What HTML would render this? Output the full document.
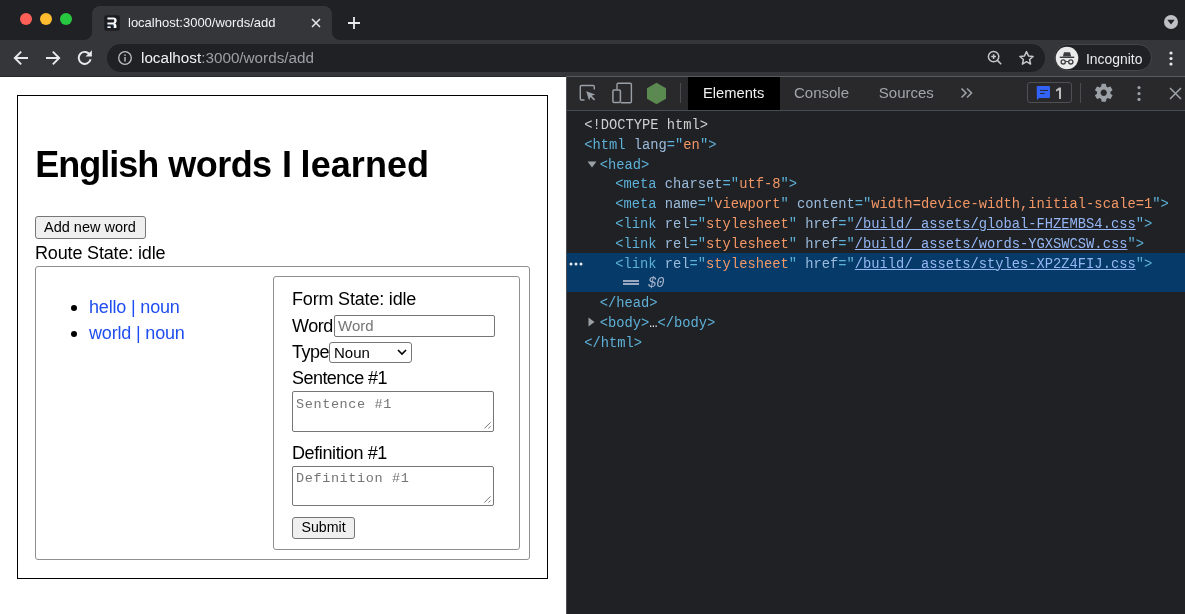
<!DOCTYPE html>
<html lang="en">
<head>
<meta charset="utf-8">
<style>
*{box-sizing:border-box;margin:0;padding:0}
html,body{width:1185px;height:614px;overflow:hidden;background:#fff}
body{will-change:transform;position:relative;font-family:"Liberation Sans",sans-serif}
.a{position:absolute}
.t{position:absolute;white-space:pre;line-height:1}
/* chrome */
#strip{left:0;top:0;width:1185px;height:40px;background:#202124}
#toolbar{left:0;top:40px;width:1185px;height:37px;background:#35363a;border-bottom:1px solid #28292c}
.light{width:12px;height:12px;border-radius:50%;top:13px}
#tab{left:92px;top:6px;width:240px;height:34px;background:#35363a;border-radius:8px 8px 0 0}
.flare{width:8px;height:8px;top:32px;background:#35363a;overflow:hidden}
.flare::after{content:"";position:absolute;width:16px;height:16px;border-radius:50%;background:#202124;top:-8px}
#fl::after{left:-8px}
#fr::after{left:0}
#omni{left:107px;top:44px;width:938px;height:28px;border-radius:14px;background:#202124}
#incog{left:1054px;top:44px;width:98px;height:27px;border-radius:14px;background:#202124;border:1px solid #45464a}
/* page */
#page{left:0;top:77px;width:566px;height:537px;background:#fff}
.lbl{font-size:18px;color:#000}
/* devtools */
#dt{left:566px;top:76px;width:619px;height:538px;background:#202124;border-left:1px solid #4d4e52;border-top:1px solid #5a5b5f}
#dtbar{left:567px;top:77px;width:618px;height:34px;background:#29292c;border-bottom:1px solid #494c50}
.code{font-family:"Liberation Mono",monospace;font-size:13.77px;white-space:pre;position:absolute;line-height:19.75px;height:19.75px}
.tg{color:#5db0d7}.an{color:#9bbbdc}.av{color:#f29766}.lk{color:#94b6f4;text-decoration:underline;text-underline-offset:0.6px}
</style>
</head>
<body>
<!-- ===== Browser chrome ===== -->
<div id="strip" class="a"></div>
<div class="a light" style="left:20px;background:#fe5f57"></div>
<div class="a light" style="left:40px;background:#febc2e"></div>
<div class="a light" style="left:60px;background:#28c840"></div>
<div id="tab" class="a"></div>
<div id="fl" class="a flare" style="left:84px"></div>
<div id="fr" class="a flare" style="left:332px"></div>
<!-- favicon -->
<svg class="a" style="left:104px;top:15px" width="16" height="16" viewBox="0 0 16 16">
<rect x="0.3" y="0.3" width="15.5" height="15.4" rx="2" fill="#1b1c1f"/>
<path d="M3.4 2.6H9.6C11.5 2.6 12.7 3.7 12.7 5.6C12.7 7 12 8 11 8.4C11.9 8.8 12.4 9.5 12.4 10.6V13H9.7V10.8C9.7 9.9 9.3 9.4 8.3 9.4H3.4V7.5H9.2C9.9 7.5 10.2 7 10.2 6.3V5.7C10.2 5 9.9 4.5 9.2 4.5H3.4Z" fill="#f4f6fb"/>
<rect x="3.4" y="11.4" width="3.3" height="1.6" fill="#f4f6fb"/>
<path d="M4.5 10.2h1.2M8 10.2h1.2" stroke="#2f5d9a" stroke-width="0.8"/>
</svg>
<div class="t" style="left:128px;top:15.6px;font-size:13px;color:#f1f3f4">localhost:3000/words/add</div>
<svg class="a" style="left:310px;top:17px" width="12" height="12" viewBox="0 0 12 12"><path d="M2 2L10 10M10 2L2 10" stroke="#e8eaed" stroke-width="1.5"/></svg>
<svg class="a" style="left:347px;top:16px" width="14" height="14" viewBox="0 0 14 14"><path d="M7 1v12M1 7h12" stroke="#e8eaed" stroke-width="1.8"/></svg>
<svg class="a" style="left:1161px;top:12px" width="20" height="20" viewBox="0 0 20 20"><circle cx="10" cy="10" r="7" fill="#bdc1c6"/><path d="M6.3 7.8h7.4L10 12.6z" fill="#202124"/></svg>

<div id="toolbar" class="a"></div>
<!-- back -->
<svg class="a" style="left:13px;top:50px" width="16" height="16" viewBox="0 0 16 16"><path d="M15 8H2.5M8.2 1.6L1.8 8 8.2 14.4" stroke="#e8eaed" stroke-width="1.9" fill="none"/></svg>
<svg class="a" style="left:45px;top:50px" width="16" height="16" viewBox="0 0 16 16"><path d="M1 8h12.5M7.8 1.6L14.2 8 7.8 14.4" stroke="#e8eaed" stroke-width="1.9" fill="none"/></svg>
<svg class="a" style="left:77px;top:49.3px" width="16" height="16" viewBox="0 0 16 16"><path d="M13.1 6.2A6 6 0 1 0 13.6 10.2" stroke="#e8eaed" stroke-width="1.9" fill="none"/><path d="M14.9 1.2v6.4H8.5z" fill="#e8eaed"/></svg>
<div id="omni" class="a"></div>
<svg class="a" style="left:117px;top:50px" width="16" height="16" viewBox="0 0 16 16"><circle cx="8" cy="8" r="6.3" stroke="#bdc1c6" stroke-width="1.3" fill="none"/><rect x="7.3" y="7" width="1.4" height="4.6" fill="#bdc1c6"/><rect x="7.3" y="4.4" width="1.4" height="1.5" fill="#bdc1c6"/></svg>
<div class="t" style="left:141px;top:50.3px;font-size:15.25px;color:#f1f3f4">localhost<span style="color:#9aa0a6">:3000/words/add</span></div>
<svg class="a" style="left:986px;top:49px" width="18" height="18" viewBox="0 0 18 18"><circle cx="7.6" cy="7.6" r="5.2" stroke="#c4c7ca" stroke-width="1.5" fill="none"/><path d="M11.4 11.4L15.2 15.2M7.6 5.2v4.8M5.2 7.6h4.8" stroke="#c4c7ca" stroke-width="1.5"/></svg>
<svg class="a" style="left:1018px;top:50px" width="17" height="16" viewBox="0 0 17 16"><path d="M8.5 1.6l2 4.3 4.6.5-3.5 3.1 1 4.6-4.1-2.4-4.1 2.4 1-4.6L1.9 6.4l4.6-.5z" stroke="#c4c7ca" stroke-width="1.5" fill="none" stroke-linejoin="round"/></svg>
<div id="incog" class="a"></div>
<svg class="a" style="left:1055px;top:46px" width="24" height="24" viewBox="0 0 24 24"><circle cx="12" cy="12" r="11.3" fill="#eaeaea"/><path d="M9 6.2h6l1.2 4.4H7.8z" fill="#3c3d40"/><rect x="4.8" y="10.6" width="14.4" height="1.4" fill="#3c3d40"/><circle cx="8.2" cy="15.9" r="2.1" stroke="#3c3d40" stroke-width="1.3" fill="none"/><circle cx="15.8" cy="15.9" r="2.1" stroke="#3c3d40" stroke-width="1.3" fill="none"/><path d="M10.3 15.6h3.4" stroke="#3c3d40" stroke-width="1"/></svg>
<div class="t" style="left:1086px;top:53px;font-size:13.9px;color:#e8eaed">Incognito</div>
<svg class="a" style="left:1168px;top:50px" width="6" height="16" viewBox="0 0 6 16"><circle cx="3" cy="3" r="1.6" fill="#e8eaed"/><circle cx="3" cy="8.5" r="1.6" fill="#e8eaed"/><circle cx="3" cy="14" r="1.6" fill="#e8eaed"/></svg>

<!-- ===== Page ===== -->
<div id="page" class="a"></div>
<div class="a" style="left:17px;top:95px;width:531px;height:484px;border:1px solid #000"></div>
<div class="t" style="left:35.2px;top:147px;font-size:36px;font-weight:700;color:#000;letter-spacing:-1px">English</div><div class="t" style="left:168.2px;top:147px;font-size:36px;font-weight:700;color:#000;letter-spacing:-0.52px">words</div><div class="t" style="left:281.9px;top:147px;font-size:36px;font-weight:700;color:#000">I</div><div class="t" style="left:300.6px;top:147px;font-size:36px;font-weight:700;color:#000;letter-spacing:0.07px">learned</div>
<div class="a" style="left:35px;top:216px;width:111px;height:22.5px;background:#efefef;border:1px solid #767676;border-radius:3px"></div>
<div class="t" style="left:44px;top:219.5px;font-size:14.5px;color:#000">Add new word</div>
<div class="t lbl" style="left:35px;top:244px;letter-spacing:-0.16px">Route State: idle</div>
<div class="a" style="left:35px;top:266px;width:495px;height:294px;border:1px solid #8f8f8f;border-radius:3px"></div>
<div class="a" style="left:71px;top:305px;width:6px;height:6px;border-radius:50%;background:#000"></div>
<div class="a" style="left:71px;top:331px;width:6px;height:6px;border-radius:50%;background:#000"></div>
<div class="t" style="left:89px;top:298px;font-size:18px;color:#1f4ef0;letter-spacing:-0.17px">hello | noun</div>
<div class="t" style="left:89px;top:324px;font-size:18px;color:#1f4ef0;letter-spacing:-0.17px">world | noun</div>

<div class="a" style="left:273px;top:276px;width:247px;height:274px;border:1px solid #8f8f8f;border-radius:3px"></div>
<div class="t lbl" style="left:292px;top:290px;letter-spacing:-0.18px">Form State: idle</div>
<div class="t lbl" style="left:292px;top:316.5px;letter-spacing:-0.45px">Word</div>
<div class="a" style="left:334px;top:315px;width:161px;height:22px;border:1px solid #767676;border-radius:2px"></div>
<div class="t" style="left:338px;top:318px;font-size:15px;color:#757575">Word</div>
<div class="t lbl" style="left:292px;top:343px;letter-spacing:-0.5px">Type</div>
<div class="a" style="left:329px;top:342px;width:83px;height:21px;border:1px solid #767676;border-radius:3px"></div>
<div class="t" style="left:334px;top:344.6px;font-size:15px;color:#000">Noun</div>
<svg class="a" style="left:397px;top:348px" width="10" height="8" viewBox="0 0 10 8"><path d="M1 2l4 4 4-4" stroke="#000" stroke-width="1.6" fill="none"/></svg>
<div class="t lbl" style="left:292px;top:369px;letter-spacing:-0.55px">Sentence #1</div>
<div class="a" style="left:292px;top:391px;width:202px;height:41px;border:1px solid #767676;border-radius:2px"></div>
<div class="t" style="left:296px;top:397.6px;font-family:'Liberation Mono',monospace;font-size:13.5px;letter-spacing:0.62px;color:#757575">Sentence #1</div>
<svg class="a" style="left:482px;top:420px" width="12" height="12" viewBox="0 0 12 12"><path d="M2.4 8.4L8.6 2.4M6.4 8.4L8.6 6.4" stroke="#6a6a6a" stroke-width="0.9"/></svg>
<div class="t lbl" style="left:292px;top:443.5px;letter-spacing:-0.39px">Definition #1</div>
<div class="a" style="left:292px;top:466px;width:202px;height:40px;border:1px solid #767676;border-radius:2px"></div>
<div class="t" style="left:296px;top:471.5px;font-family:'Liberation Mono',monospace;font-size:13.5px;letter-spacing:0.62px;color:#757575">Definition #1</div>
<svg class="a" style="left:482px;top:494px" width="12" height="12" viewBox="0 0 12 12"><path d="M2.4 8.4L8.6 2.4M6.4 8.4L8.6 6.4" stroke="#6a6a6a" stroke-width="0.9"/></svg>
<div class="a" style="left:292px;top:517px;width:63px;height:22px;background:#efefef;border:1px solid #767676;border-radius:3px"></div>
<div class="t" style="left:301.5px;top:520.3px;font-size:14.2px;color:#000">Submit</div>

<!-- ===== DevTools ===== -->
<div id="dt" class="a"></div>
<div id="dtbar" class="a"></div>

<!-- dt toolbar icons -->
<svg class="a" style="left:579px;top:84px" width="18" height="18" viewBox="0 0 18 18"><path d="M5.5 16H2.5a1.2 1.2 0 0 1-1.2-1.2V2.7a1.2 1.2 0 0 1 1.2-1.2h11.6a1.2 1.2 0 0 1 1.2 1.2V5.5" stroke="#9aa0a6" stroke-width="1.4" fill="none"/><path d="M7.2 7.2l9 3.2-3.6 1.3 3.6 3.6-1.2 1.2-3.6-3.6-1.3 3.6z" fill="#9aa0a6"/></svg>
<svg class="a" style="left:611px;top:82px" width="22" height="22" viewBox="0 0 22 22"><path d="M6 7.5V2.6a1.3 1.3 0 0 1 1.3-1.3h11.8a1.3 1.3 0 0 1 1.3 1.3v16.9a1.3 1.3 0 0 1-1.3 1.3H10" stroke="#9aa0a6" stroke-width="1.4" fill="none"/><rect x="1.9" y="7.9" width="7.5" height="12.6" rx="1.2" stroke="#9aa0a6" stroke-width="1.5" fill="none"/></svg>
<svg class="a" style="left:646px;top:82px" width="21" height="23" viewBox="0 0 21 23"><path d="M10.5 0.8L20 6.2v10.6L10.5 22.2 1 16.8V6.2z" fill="#5b8a50"/><path d="M10 4v15" stroke="#777" stroke-width="0.9" stroke-dasharray="1.2 1.6"/></svg>
<div class="a" style="left:680px;top:83px;width:1px;height:20px;background:#4a4c50"></div>
<div class="a" style="left:688px;top:77px;width:92px;height:33px;background:#000"></div>
<div class="t" style="left:703px;top:86px;font-size:14.7px;color:#f1f1f1">Elements</div>
<div class="t" style="left:794px;top:85.2px;font-size:15px;color:#a2a5a9">Console</div>
<div class="t" style="left:878.8px;top:85.2px;font-size:15px;color:#a2a5a9">Sources</div>
<svg class="a" style="left:959px;top:86px" width="15" height="14" viewBox="0 0 15 14"><path d="M2.5 2.5l4.5 4.5-4.5 4.5M8 2.5l4.5 4.5L8 11.5" stroke="#9aa0a6" stroke-width="1.6" fill="none"/></svg>
<div class="a" style="left:1027px;top:82px;width:45px;height:21px;border:1px solid #4e5054;border-radius:3px"></div>
<svg class="a" style="left:1036px;top:86px" width="16" height="15" viewBox="0 0 16 15"><path d="M0.7 1.1a1 1 0 0 1 1-1h11.3a1 1 0 0 1 1 1v10a1 1 0 0 1-1 1H3.2L0.9 13.9z" fill="#3263f6"/><path d="M4 4.4h8M4 7.5h4.7" stroke="#292a2d" stroke-width="1"/></svg>
<svg class="a" style="left:1055px;top:87px" width="8" height="13" viewBox="0 0 8 13"><path d="M4 0.6h2v11.5H4V3.2L1 4.5V2.7z" fill="#bdbdbd"/></svg>
<div class="a" style="left:1080px;top:83px;width:1px;height:20px;background:#4a4c50"></div>
<svg class="a" style="left:1092.6px;top:82.3px" width="21.5" height="21.5" viewBox="0 0 24 24"><path fill="#9aa0a6" d="M19.43 12.98c.04-.32.07-.64.07-.98s-.03-.66-.07-.98l2.11-1.65c.19-.15.24-.42.12-.64l-2-3.46c-.12-.22-.39-.3-.61-.22l-2.49 1c-.52-.4-1.08-.73-1.69-.98l-.38-2.65A.49.49 0 0 0 14 2h-4c-.25 0-.46.18-.49.42l-.38 2.65c-.61.25-1.17.59-1.69.98l-2.49-1c-.23-.09-.49 0-.61.22l-2 3.46c-.13.22-.07.49.12.64l2.11 1.65c-.04.32-.07.65-.07.98s.03.66.07.98l-2.11 1.65c-.19.15-.24.42-.12.64l2 3.46c.12.22.39.3.61.22l2.49-1c.52.4 1.08.73 1.69.98l.38 2.65c.03.24.24.42.49.42h4c.25 0 .46-.18.49-.42l.38-2.65c.61-.25 1.17-.59 1.69-.98l2.49 1c.23.09.49 0 .61-.22l2-3.46c.12-.22.07-.49-.12-.64l-2.11-1.65zM12 15.5c-1.93 0-3.5-1.57-3.5-3.5s1.57-3.5 3.5-3.5 3.5 1.57 3.5 3.5-1.57 3.5-3.5 3.5z"/></svg>
<svg class="a" style="left:1136px;top:85px" width="6" height="17" viewBox="0 0 6 17"><circle cx="3" cy="2.6" r="1.6" fill="#9aa0a6"/><circle cx="3" cy="8.6" r="1.6" fill="#9aa0a6"/><circle cx="3" cy="14.4" r="1.6" fill="#9aa0a6"/></svg>
<svg class="a" style="left:1169px;top:87px" width="13" height="13" viewBox="0 0 13 13"><path d="M1 1l11 11M12 1L1 12" stroke="#9aa0a6" stroke-width="1.6"/></svg>

<!-- DOM tree -->
<div class="a" style="left:567px;top:252.7px;width:618px;height:39.2px;background:#063b69"></div>
<div class="code" style="left:584.2px;top:115.90px;color:#cfd0d0">&lt;!DOCTYPE html&gt;</div>
<div class="code" style="left:584.2px;top:135.72px"><span class="tg">&lt;html</span> <span class="an">lang</span><span class="tg">="</span><span class="av">en</span><span class="tg">"&gt;</span></div>
<svg class="a" style="left:587px;top:161px" width="10" height="7" viewBox="0 0 10 7"><path d="M0.5 0.5h9L5 6.5z" fill="#9aa0a6"/></svg>
<div class="code" style="left:599.7px;top:155.54px"><span class="tg">&lt;head&gt;</span></div>
<div class="code" style="left:615.2px;top:175.36px"><span class="tg">&lt;meta</span> <span class="an">charset</span><span class="tg">="</span><span class="av">utf-8</span><span class="tg">"&gt;</span></div>
<div class="code" style="left:615.2px;top:195.18px"><span class="tg">&lt;meta</span> <span class="an">name</span><span class="tg">="</span><span class="av">viewport</span><span class="tg">"</span> <span class="an">content</span><span class="tg">="</span><span class="av">width=device-width,initial-scale=1</span><span class="tg">"&gt;</span></div>
<div class="code" style="left:615.2px;top:215.00px"><span class="tg">&lt;link</span> <span class="an">rel</span><span class="tg">="</span><span class="av">stylesheet</span><span class="tg">"</span> <span class="an">href</span><span class="tg">="</span><span class="lk">/build/_assets/global-FHZEMBS4.css</span><span class="tg">"&gt;</span></div>
<div class="code" style="left:615.2px;top:234.82px"><span class="tg">&lt;link</span> <span class="an">rel</span><span class="tg">="</span><span class="av">stylesheet</span><span class="tg">"</span> <span class="an">href</span><span class="tg">="</span><span class="lk">/build/_assets/words-YGXSWCSW.css</span><span class="tg">"&gt;</span></div>
<div class="code" style="left:615.2px;top:254.64px"><span class="tg">&lt;link</span> <span class="an">rel</span><span class="tg">="</span><span class="av">stylesheet</span><span class="tg">"</span> <span class="an">href</span><span class="tg">="</span><span class="lk">/build/_assets/styles-XP2Z4FIJ.css</span><span class="tg">"&gt;</span></div>
<svg class="a" style="left:569px;top:262px" width="14" height="4" viewBox="0 0 14 4"><circle cx="2" cy="2" r="1.5" fill="#e8eaed"/><circle cx="7" cy="2" r="1.5" fill="#e8eaed"/><circle cx="12" cy="2" r="1.5" fill="#e8eaed"/></svg>
<div class="a" style="left:623px;top:280.2px;width:16px;height:1.7px;background:#9aa7c0"></div><div class="a" style="left:623px;top:283.3px;width:16px;height:1.7px;background:#9aa7c0"></div><div class="code" style="left:623.2px;top:274.46px;color:#a9b5cc">   <i>$0</i></div>
<div class="code" style="left:599.7px;top:294.28px"><span class="tg">&lt;/head&gt;</span></div>
<svg class="a" style="left:588px;top:317px" width="7" height="10" viewBox="0 0 7 10"><path d="M0.5 0.5v9L6.5 5z" fill="#9aa0a6"/></svg>
<div class="code" style="left:599.7px;top:314.10px"><span class="tg">&lt;body&gt;</span><span style="color:#e8eaed">…</span><span class="tg">&lt;/body&gt;</span></div>
<div class="code" style="left:584.2px;top:333.92px"><span class="tg">&lt;/html&gt;</span></div>
</body>
</html>
